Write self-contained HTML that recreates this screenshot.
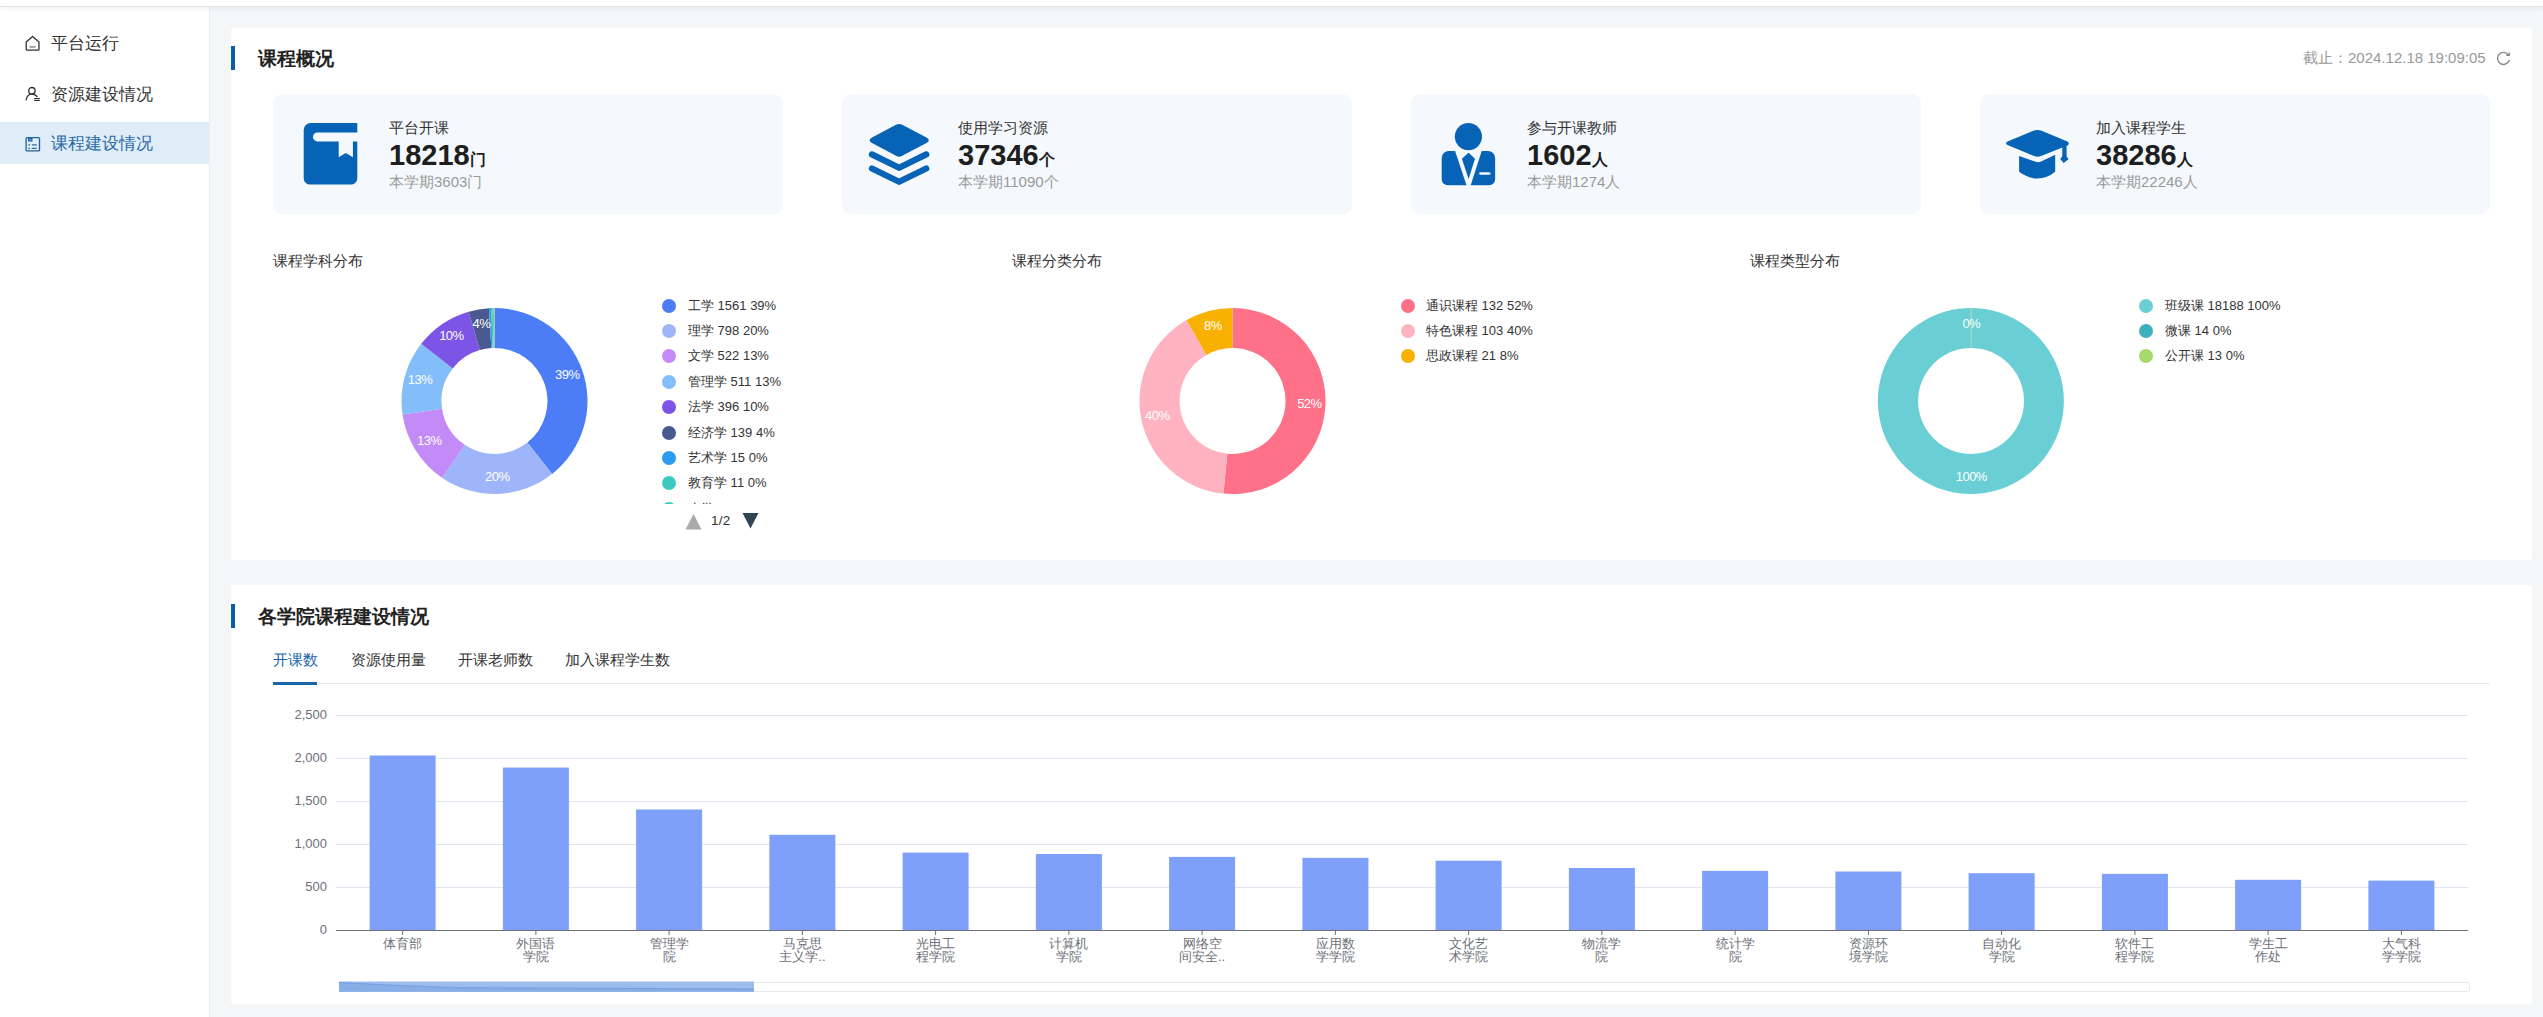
<!DOCTYPE html><html><head><meta charset="utf-8"><style>
*{box-sizing:border-box;margin:0;padding:0}
html,body{width:2543px;height:1017px;overflow:hidden;background:#f5f6f8;font-family:"Liberation Sans", sans-serif;color:#333}
.abs{position:absolute}
.top{position:absolute;left:0;top:0;width:2543px;height:7px;background:#fff;border-bottom:1px solid #e3e4e6;box-shadow:0 1px 5px rgba(0,0,0,.07);z-index:5}
.side{position:absolute;left:0;top:6px;width:210px;height:1011px;background:#fff;border-right:1px solid #eceef1;z-index:3}
.mi{position:absolute;left:0;width:209px;height:42px;font-size:17px;color:#333;line-height:42px}
.mi span{position:absolute;left:51px;top:1px}
.mi svg{position:absolute;left:25px;top:13px}
.mi.act{background:#deedf7;color:#2a6aa8}
.card{position:absolute;left:231px;width:2301px;background:#fff;border-radius:3px}
.ttl{position:absolute;left:27px;font-size:19px;font-weight:bold;color:#222;line-height:24px}
.bar{position:absolute;left:0;width:4px;height:24px;background:#0a5fad}
.stat{position:absolute;top:66px;width:510px;height:120px;background:#f5f9fd;border-radius:9px}
.stat .lb{position:absolute;left:116px;top:25px;font-size:15px;color:#333;line-height:18px}
.stat .num{position:absolute;left:116px;top:44px;font-size:29px;font-weight:bold;color:#1e1e1e;line-height:34px;white-space:nowrap}
.stat .num small{font-size:16px;font-weight:bold}
.stat .sub{position:absolute;left:116px;top:79px;font-size:15px;color:#999;line-height:18px;white-space:nowrap}
.stat svg{position:absolute}
.ct{position:absolute;top:224px;font-size:15px;color:#333;line-height:18px}
.lg{position:absolute;font-size:13px;color:#333;line-height:16px;white-space:nowrap}
.dot{position:absolute;width:14px;height:14px;border-radius:50%}
.tab{position:absolute;top:65px;font-size:15px;color:#333;line-height:20px}
.yl{position:absolute;font-size:13px;color:#6e7079;line-height:14px;text-align:right;width:60px}
.xl{position:absolute;font-size:13px;color:#6e7079;line-height:13px;text-align:center;width:100px}
</style></head><body>
<div class="top"></div>
<div class="side">
<div class="mi" style="top:16px"><svg width="16" height="17" viewBox="0 0 16 17"><path d="M1.2 6.9 L7.6 1.4 L14 6.9 V14.3 Q14 15.2 13.1 15.2 H2.1 Q1.2 15.2 1.2 14.3 Z" fill="none" stroke="#333" stroke-width="1.3" stroke-linejoin="round"/><path d="M4.6 11.9 H10.6" stroke="#666" stroke-width="1.2"/></svg><span>平台运行</span></div>
<div class="mi" style="top:67px"><svg width="16" height="17" viewBox="0 0 16 17"><circle cx="6.9" cy="4.7" r="3.2" fill="none" stroke="#333" stroke-width="1.3"/><path d="M1 14.4 C1.5 10.5 3.8 8.2 6.9 8.2 C9.3 8.2 11.2 9.3 12.3 11" fill="none" stroke="#333" stroke-width="1.3"/><path d="M9.2 12.5 H14.8 M9.2 14.4 H14.8" stroke="#333" stroke-width="1.1"/></svg><span>资源建设情况</span></div>
<div class="mi act" style="top:116px"><svg width="16" height="17" viewBox="0 0 16 17"><rect x="1.1" y="2.6" width="13.4" height="13.3" rx="1" fill="none" stroke="#245f96" stroke-width="1.3"/><rect x="3.6" y="3" width="3.4" height="3" fill="#4a8fd0" stroke="#245f96" stroke-width="1"/><path d="M3.2 9.9 H5 M6.8 9.9 H11.8 M3.2 13.4 H5 M6.8 13.4 H11.8" stroke="#3a6fa0" stroke-width="1.2"/></svg><span>课程建设情况</span></div>
</div>
<div class="card" style="top:28px;height:532px">
<div class="bar" style="top:18px"></div><div class="ttl" style="top:19px">课程概况</div>
<div class="abs" style="left:2072px;top:21px;font-size:15px;color:#999;line-height:18px;white-space:nowrap">截止：2024.12.18 19:09:05</div>
<svg class="abs" style="left:2265px;top:23px" width="15" height="15" viewBox="0 0 15 15"><path d="M12.6 4.2 A6 6 0 1 0 13.3 9" fill="none" stroke="#888" stroke-width="1.4"/><path d="M10.2 4.4 H13.2 V1.4" fill="none" stroke="#888" stroke-width="1.4"/></svg>
<div class="stat" style="left:42px"><svg style="left:30px;top:29px" width="56" height="64" viewBox="0 0 56 64"><path d="M7.7 0 H54.3 V9.5 H14.4 A4.45 4.45 0 0 0 14.4 18.4 H35.7 V34.3 L42.8 30.1 L49.9 34.3 V18.4 H54.3 V55.2 A6.4 6.4 0 0 1 47.9 61.6 H7.1 A6.4 6.4 0 0 1 0.7 55.2 V7 A7 7 0 0 1 7.7 0 Z" fill="#0763b5"/></svg><div class="lb">平台开课</div><div class="num">18218<small>门</small></div><div class="sub">本学期3603门</div></div>
<div class="stat" style="left:611px"><svg style="left:26px;top:29px" width="64" height="64" viewBox="0 0 64 64"><path d="M4 14.5 L28 1.8 Q31.1 0.3 34.2 1.8 L58.5 14.5 Q63.2 17.3 58.5 20.1 L34.2 32.8 Q31.1 34.5 28 32.8 L4 20.1 Q-0.8 17.3 4 14.5 Z" fill="#0763b5"/><path d="M3.9 31.4 L31.1 44.8 L58.3 31.4" fill="none" stroke="#0763b5" stroke-width="6.2" stroke-linecap="round" stroke-linejoin="round"/><path d="M3.9 45.5 L31.1 58.8 L58.3 45.5" fill="none" stroke="#0763b5" stroke-width="6.2" stroke-linecap="round" stroke-linejoin="round"/></svg><div class="lb">使用学习资源</div><div class="num">37346<small>个</small></div><div class="sub">本学期11090个</div></div>
<div class="stat" style="left:1180px"><svg style="left:30px;top:29px" width="56" height="64" viewBox="0 0 56 64"><circle cx="27.4" cy="13.6" r="13.6" fill="#0763b5"/><path d="M14.1 27.9 L25.5 62.3 H6.7 A6 6 0 0 1 0.7 56.3 V34.9 A7 7 0 0 1 7.7 27.9 Z" fill="#0763b5"/><path d="M40.7 27.9 L29.7 62.3 H48.1 A6 6 0 0 0 54.1 56.3 V34.9 A7 7 0 0 0 47.1 27.9 Z" fill="#0763b5"/><path d="M27.6 29.7 L34 35.7 L27.6 55.9 L20.9 35.7 Z" fill="#0763b5"/><rect x="38.2" y="49.2" width="11.3" height="2.6" rx="1.3" fill="#f5f9fd"/></svg><div class="lb">参与开课教师</div><div class="num">1602<small>人</small></div><div class="sub">本学期1274人</div></div>
<div class="stat" style="left:1749px"><svg style="left:25px;top:29px" width="66" height="64" viewBox="0 0 66 64"><path d="M2.5 18.5 L29 7.6 Q32.5 6.3 36 7.6 L62.5 18.6 Q65.2 20.5 62.5 22.5 L36 33 Q32.5 34.5 29 33 L2.5 22 Q-0.6 20.3 2.5 18.5 Z" fill="#0763b5"/><rect x="57.3" y="21" width="4.3" height="13" fill="#0763b5"/><path d="M55.2 36.1 L58.7 40 L63.7 36.1 L60.8 33 L57.5 33 Z" fill="#0763b5"/><path d="M14.1 32.9 L30 38.6 Q33 39.8 36 38.6 L50.2 31.8 V48.8 Q42 55.5 32.5 55.5 Q23 55.5 14.1 48.8 Z" fill="#0763b5"/></svg><div class="lb">加入课程学生</div><div class="num">38286<small>人</small></div><div class="sub">本学期22246人</div></div>
<div class="ct" style="left:42px">课程学科分布</div>
<div class="dot" style="left:431px;top:270.5px;background:#4c7df7"></div>
<div class="lg" style="left:457px;top:269.5px">工学 1561 39%</div>
<div class="dot" style="left:431px;top:295.9px;background:#9eb6f9"></div>
<div class="lg" style="left:457px;top:294.9px">理学 798 20%</div>
<div class="dot" style="left:431px;top:321.3px;background:#c38bf8"></div>
<div class="lg" style="left:457px;top:320.3px">文学 522 13%</div>
<div class="dot" style="left:431px;top:346.7px;background:#84befa"></div>
<div class="lg" style="left:457px;top:345.7px">管理学 511 13%</div>
<div class="dot" style="left:431px;top:372.1px;background:#7c55e6"></div>
<div class="lg" style="left:457px;top:371.1px">法学 396 10%</div>
<div class="dot" style="left:431px;top:397.5px;background:#4a598f"></div>
<div class="lg" style="left:457px;top:396.5px">经济学 139 4%</div>
<div class="dot" style="left:431px;top:422.9px;background:#2d9cef"></div>
<div class="lg" style="left:457px;top:421.9px">艺术学 15 0%</div>
<div class="dot" style="left:431px;top:448.3px;background:#3ccac0"></div>
<div class="lg" style="left:457px;top:447.3px">教育学 11 0%</div>
<div class="ct" style="left:781px">课程分类分布</div>
<div class="dot" style="left:1170px;top:270.5px;background:#ff7188"></div>
<div class="lg" style="left:1195px;top:269.5px">通识课程 132 52%</div>
<div class="dot" style="left:1170px;top:295.9px;background:#ffb3c0"></div>
<div class="lg" style="left:1195px;top:294.9px">特色课程 103 40%</div>
<div class="dot" style="left:1170px;top:321.3px;background:#f8b100"></div>
<div class="lg" style="left:1195px;top:320.3px">思政课程 21 8%</div>
<div class="ct" style="left:1519px">课程类型分布</div>
<div class="dot" style="left:1908px;top:270.5px;background:#69cfd4"></div>
<div class="lg" style="left:1934px;top:269.5px">班级课 18188 100%</div>
<div class="dot" style="left:1908px;top:295.9px;background:#3eb0bd"></div>
<div class="lg" style="left:1934px;top:294.9px">微课 14 0%</div>
<div class="dot" style="left:1908px;top:321.3px;background:#a5d96a"></div>
<div class="lg" style="left:1934px;top:320.3px">公开课 13 0%</div>
<svg class="abs" style="left:0;top:0" width="2301" height="532"><path d="M263.50,280.00A93,93 0 0 1 321.10,446.01L296.33,414.61A53,53 0 0 0 263.50,320.00Z" fill="#4c7df7"/><path d="M321.10,446.01A93,93 0 0 1 211.25,449.93L233.72,416.84A53,53 0 0 0 296.33,414.61Z" fill="#9eb6f9"/><path d="M211.25,449.93A93,93 0 0 1 171.50,386.62L211.07,380.76A53,53 0 0 0 233.72,416.84Z" fill="#c38bf8"/><path d="M171.50,386.62A93,93 0 0 1 190.19,315.78L221.72,340.39A53,53 0 0 0 211.07,380.76Z" fill="#84befa"/><path d="M190.19,315.78A93,93 0 0 1 237.76,283.63L248.83,322.07A53,53 0 0 0 221.72,340.39Z" fill="#7c55e6"/><path d="M237.76,283.63A93,93 0 0 1 257.90,280.17L260.31,320.10A53,53 0 0 0 248.83,322.07Z" fill="#4a598f"/><path d="M257.90,280.17A93,93 0 0 1 260.11,280.06L261.57,320.04A53,53 0 0 0 260.31,320.10Z" fill="#2d9cef"/><path d="M260.11,280.06A93,93 0 0 1 261.73,280.02L262.49,320.01A53,53 0 0 0 261.57,320.04Z" fill="#3ccac0"/><path d="M261.73,280.02A93,93 0 0 1 262.91,280.00L263.16,320.00A53,53 0 0 0 262.49,320.01Z" fill="#62d3a8"/><path d="M262.91,280.00A93,93 0 0 1 263.50,280.00L263.50,320.00A53,53 0 0 0 263.16,320.00Z" fill="#a3d86c"/><text x="336.2" y="350.8" fill="#fff" font-size="13" letter-spacing="-0.5" text-anchor="middle">39%</text><text x="266.2" y="453.0" fill="#fff" font-size="13" letter-spacing="-0.5" text-anchor="middle">20%</text><text x="198.3" y="416.9" fill="#fff" font-size="13" letter-spacing="-0.5" text-anchor="middle">13%</text><text x="189.0" y="356.4" fill="#fff" font-size="13" letter-spacing="-0.5" text-anchor="middle">13%</text><text x="220.4" y="312.2" fill="#fff" font-size="13" letter-spacing="-0.5" text-anchor="middle">10%</text><text x="250.4" y="300.1" fill="#fff" font-size="13" letter-spacing="-0.5" text-anchor="middle">4%</text><path d="M1001.50,280.00A93,93 0 1 1 992.38,465.55L996.31,425.74A53,53 0 1 0 1001.50,320.00Z" fill="#ff7188"/><path d="M992.38,465.55A93,93 0 0 1 955.66,292.08L975.38,326.89A53,53 0 0 0 996.31,425.74Z" fill="#ffb3c0"/><path d="M955.66,292.08A93,93 0 0 1 1001.50,280.00L1001.50,320.00A53,53 0 0 0 975.38,326.89Z" fill="#f8b100"/><text x="1078.4" y="379.8" fill="#fff" font-size="13" letter-spacing="-0.5" text-anchor="middle">52%</text><text x="926.2" y="391.9" fill="#fff" font-size="13" letter-spacing="-0.5" text-anchor="middle">40%</text><text x="981.9" y="301.5" fill="#fff" font-size="13" letter-spacing="-0.5" text-anchor="middle">8%</text><path d="M1740.30,280.00A93,93 0 1 1 1739.43,280.00L1739.81,320.00A53,53 0 1 0 1740.30,320.00Z" fill="#69cfd4"/><path d="M1739.43,280.00A93,93 0 0 1 1739.88,280.00L1740.06,320.00A53,53 0 0 0 1739.81,320.00Z" fill="#3eb0bd"/><path d="M1739.88,280.00A93,93 0 0 1 1740.30,280.00L1740.30,320.00A53,53 0 0 0 1740.06,320.00Z" fill="#a5d96a"/><text x="1740.3" y="453.0" fill="#fff" font-size="13" letter-spacing="-0.5" text-anchor="middle">100%</text><text x="1740.3" y="300.0" fill="#fff" font-size="13" letter-spacing="-0.5" text-anchor="middle">0%</text></svg>
<div class="abs" style="left:431px;top:469px;width:200px;height:6.5px;overflow:hidden"><div class="dot" style="left:0;top:4.7px;background:#3ccac0"></div><div class="lg" style="left:26px;top:3.7px">农学 8 0%</div></div>
<svg class="abs" style="left:454px;top:485px" width="18" height="18"><path d="M0.5 16.5 L8.5 1 L16.5 16.5 Z" fill="#aaa"/></svg>
<div class="abs" style="left:480px;top:485px;font-size:13.5px;color:#333;line-height:16px;letter-spacing:0.3px">1/2</div>
<svg class="abs" style="left:511px;top:484px" width="18" height="18"><path d="M0.5 1 L16.5 1 L8.5 16.5 Z" fill="#2f4554"/></svg>
</div>
<div class="card" style="top:585px;height:419px">
<div class="bar" style="top:19px"></div><div class="ttl" style="top:20px">各学院课程建设情况</div>
<div class="tab" style="left:42px;color:#1b64a8">开课数</div>
<div class="tab" style="left:120px;color:#333">资源使用量</div>
<div class="tab" style="left:227px;color:#333">开课老师数</div>
<div class="tab" style="left:334px;color:#333">加入课程学生数</div>
<div class="abs" style="left:42px;top:98px;width:2217px;height:1px;background:#e4e7ed"></div>
<div class="abs" style="left:42px;top:97px;width:44px;height:3px;background:#1b64a8"></div>
<div class="yl" style="left:36px;top:338px">0</div>
<div class="yl" style="left:36px;top:295px">500</div>
<div class="yl" style="left:36px;top:252px">1,000</div>
<div class="yl" style="left:36px;top:209px">1,500</div>
<div class="yl" style="left:36px;top:166px">2,000</div>
<div class="yl" style="left:36px;top:123px">2,500</div>
<div class="xl" style="left:121.6px;top:352px">体育部</div>
<div class="xl" style="left:254.9px;top:352px">外国语<br>学院</div>
<div class="xl" style="left:388.1px;top:352px">管理学<br>院</div>
<div class="xl" style="left:521.4px;top:352px">马克思<br>主义学..</div>
<div class="xl" style="left:654.6px;top:352px">光电工<br>程学院</div>
<div class="xl" style="left:787.9px;top:352px">计算机<br>学院</div>
<div class="xl" style="left:921.1px;top:352px">网络空<br>间安全..</div>
<div class="xl" style="left:1054.4px;top:352px">应用数<br>学学院</div>
<div class="xl" style="left:1187.6px;top:352px">文化艺<br>术学院</div>
<div class="xl" style="left:1320.9px;top:352px">物流学<br>院</div>
<div class="xl" style="left:1454.1px;top:352px">统计学<br>院</div>
<div class="xl" style="left:1587.4px;top:352px">资源环<br>境学院</div>
<div class="xl" style="left:1720.6px;top:352px">自动化<br>学院</div>
<div class="xl" style="left:1853.9px;top:352px">软件工<br>程学院</div>
<div class="xl" style="left:1987.1px;top:352px">学生工<br>作处</div>
<div class="xl" style="left:2120.4px;top:352px">大气科<br>学学院</div>
<svg class="abs" style="left:0;top:0" width="2301" height="419"><line x1="105" y1="302.5" x2="2237" y2="302.5" stroke="#e0e6f1" stroke-width="1"/><line x1="105" y1="259.5" x2="2237" y2="259.5" stroke="#e0e6f1" stroke-width="1"/><line x1="105" y1="216.5" x2="2237" y2="216.5" stroke="#e0e6f1" stroke-width="1"/><line x1="105" y1="173.5" x2="2237" y2="173.5" stroke="#e0e6f1" stroke-width="1"/><line x1="105" y1="130.5" x2="2237" y2="130.5" stroke="#e0e6f1" stroke-width="1"/><rect x="138.6" y="170.5" width="66" height="174.5" fill="#7fa0fa"/><line x1="171.6" y1="345" x2="171.6" y2="350" stroke="#6e7079" stroke-width="1"/><rect x="271.9" y="182.6" width="66" height="162.4" fill="#7fa0fa"/><line x1="304.9" y1="345" x2="304.9" y2="350" stroke="#6e7079" stroke-width="1"/><rect x="405.1" y="224.5" width="66" height="120.5" fill="#7fa0fa"/><line x1="438.1" y1="345" x2="438.1" y2="350" stroke="#6e7079" stroke-width="1"/><rect x="538.4" y="249.8" width="66" height="95.2" fill="#7fa0fa"/><line x1="571.4" y1="345" x2="571.4" y2="350" stroke="#6e7079" stroke-width="1"/><rect x="671.6" y="267.6" width="66" height="77.4" fill="#7fa0fa"/><line x1="704.6" y1="345" x2="704.6" y2="350" stroke="#6e7079" stroke-width="1"/><rect x="804.9" y="269.0" width="66" height="76.0" fill="#7fa0fa"/><line x1="837.9" y1="345" x2="837.9" y2="350" stroke="#6e7079" stroke-width="1"/><rect x="938.1" y="271.9" width="66" height="73.1" fill="#7fa0fa"/><line x1="971.1" y1="345" x2="971.1" y2="350" stroke="#6e7079" stroke-width="1"/><rect x="1071.4" y="272.8" width="66" height="72.2" fill="#7fa0fa"/><line x1="1104.4" y1="345" x2="1104.4" y2="350" stroke="#6e7079" stroke-width="1"/><rect x="1204.6" y="275.7" width="66" height="69.3" fill="#7fa0fa"/><line x1="1237.6" y1="345" x2="1237.6" y2="350" stroke="#6e7079" stroke-width="1"/><rect x="1337.9" y="283.0" width="66" height="62.0" fill="#7fa0fa"/><line x1="1370.9" y1="345" x2="1370.9" y2="350" stroke="#6e7079" stroke-width="1"/><rect x="1471.1" y="285.9" width="66" height="59.1" fill="#7fa0fa"/><line x1="1504.1" y1="345" x2="1504.1" y2="350" stroke="#6e7079" stroke-width="1"/><rect x="1604.4" y="286.5" width="66" height="58.5" fill="#7fa0fa"/><line x1="1637.4" y1="345" x2="1637.4" y2="350" stroke="#6e7079" stroke-width="1"/><rect x="1737.6" y="288.2" width="66" height="56.8" fill="#7fa0fa"/><line x1="1770.6" y1="345" x2="1770.6" y2="350" stroke="#6e7079" stroke-width="1"/><rect x="1870.9" y="288.8" width="66" height="56.2" fill="#7fa0fa"/><line x1="1903.9" y1="345" x2="1903.9" y2="350" stroke="#6e7079" stroke-width="1"/><rect x="2004.1" y="294.8" width="66" height="50.2" fill="#7fa0fa"/><line x1="2037.1" y1="345" x2="2037.1" y2="350" stroke="#6e7079" stroke-width="1"/><rect x="2137.4" y="295.6" width="66" height="49.4" fill="#7fa0fa"/><line x1="2170.4" y1="345" x2="2170.4" y2="350" stroke="#6e7079" stroke-width="1"/><line x1="105" y1="345.5" x2="2237" y2="345.5" stroke="#6e7079" stroke-width="1"/><rect x="108.5" y="397.5" width="2130" height="9" rx="2" fill="none" stroke="#e4e9f2"/><rect x="108" y="396.5" width="415" height="10.3" fill="#9bbcec"/><path d="M108,397.5 Q169,401 229,402.70000000000005 L523,404 V406.79999999999995 H108 Z" fill="#88aee8"/><path d="M108,397.5 Q169,401 229,402.70000000000005 L523,404" fill="none" stroke="#6d98df" stroke-width="0.8"/></svg>
</div>
</body></html>
